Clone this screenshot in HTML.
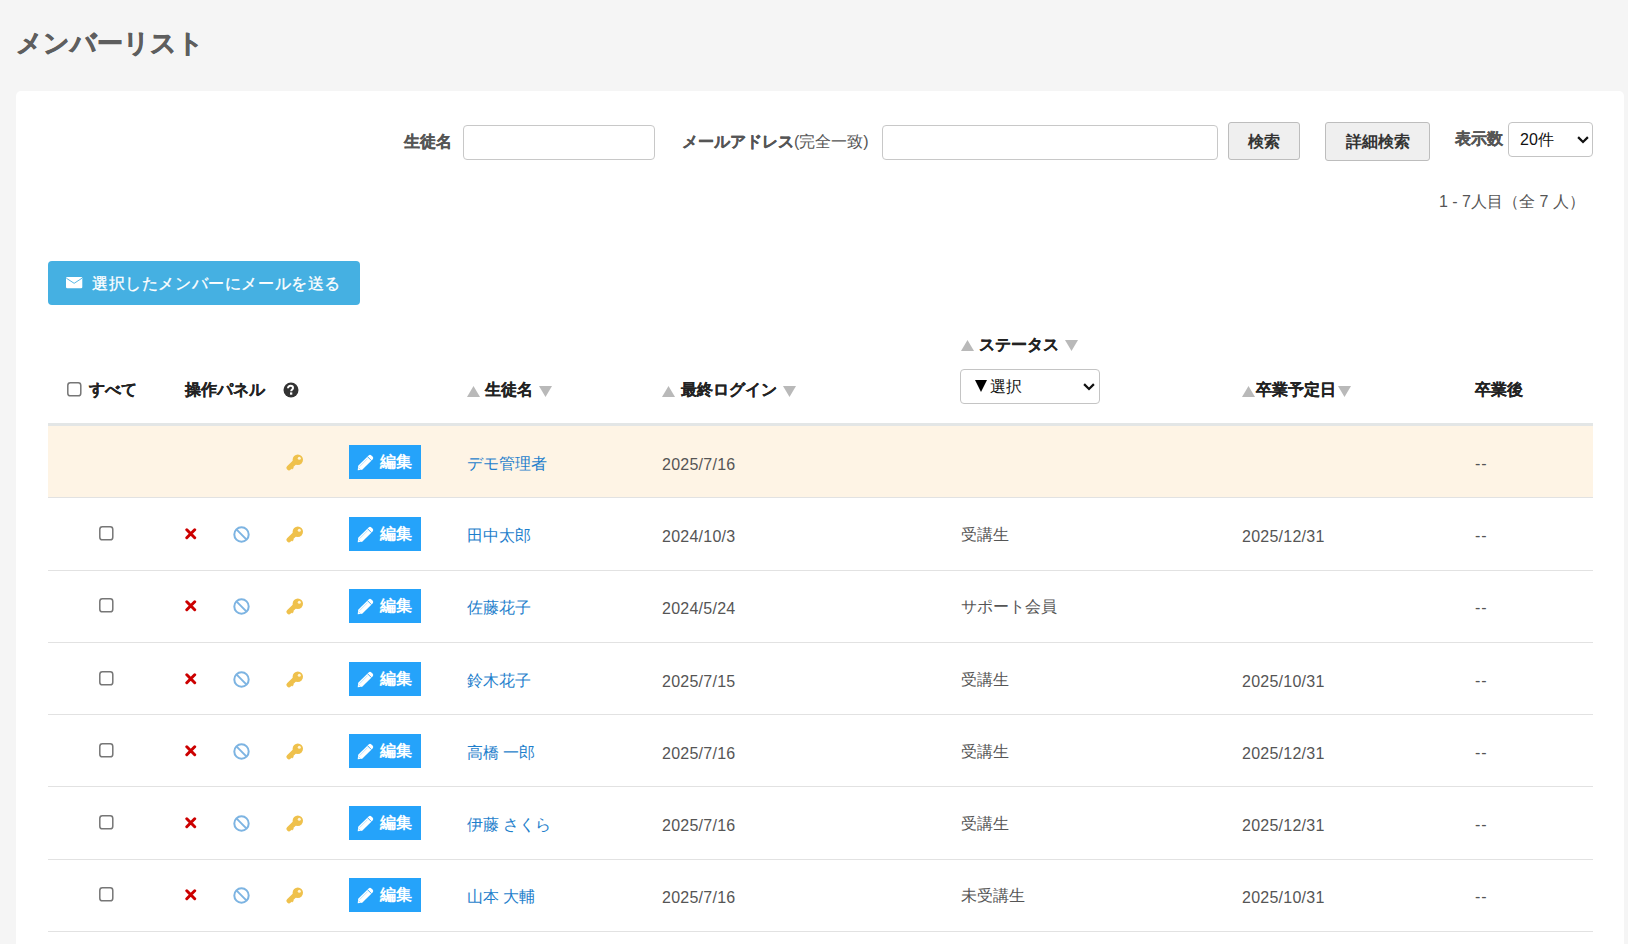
<!DOCTYPE html><html lang="ja"><head><meta charset="utf-8"><title>メンバーリスト</title><style>
*{box-sizing:border-box}
html,body{margin:0;padding:0}
body{width:1628px;height:944px;overflow:hidden;background:#f5f5f5;font-family:"Liberation Sans", sans-serif;position:relative;color:#555}
.a{position:absolute;white-space:nowrap}
.t{position:absolute;white-space:nowrap;line-height:20px;height:20px}
h1{position:absolute;left:16px;top:25px;margin:0;font-size:26px;line-height:36px;font-weight:bold;color:#5e5e5e;letter-spacing:0px;-webkit-text-stroke:0.6px #5e5e5e}
.card{position:absolute;left:16px;top:91px;width:1608px;height:900px;background:#fff;border-radius:5px}
.lbl{font-size:16px;font-weight:bold;color:#555;-webkit-text-stroke:0.25px #555}
.inp{position:absolute;background:#fff;border:1px solid #c8c8c8;border-radius:4px}
.btn{position:absolute;background:#efefef;border:1px solid #bdbdbd;border-radius:3px;font-size:16px;font-weight:bold;color:#333;text-align:center}
.sel{position:absolute;background:#fff;border:1px solid #c4c4c4;border-radius:4px;font-size:16px;color:#111}
.th{font-size:16px;font-weight:bold;color:#222;-webkit-text-stroke:0.15px #222}
.tri{color:#b9b9b9}
.row{position:absolute;left:48px;width:1545px}
.hl{background:#fef4e5}
.bd{position:absolute;left:48px;width:1545px;height:1px;background:#e2e2e2}
.cb{position:absolute;width:13px;height:13px;border:1px solid #767676;border-radius:2px;background:#fff}
.ebtn{position:absolute;width:72px;height:34px;background:#25a3fa;color:#fff;font-size:16px;font-weight:bold}
.name{font-size:16px;color:#1f7fcc}
.td{font-size:16px;color:#555}
.dt{letter-spacing:0.25px}
</style></head><body><h1>メンバーリスト</h1>
<div class="card"></div>
<div class="t lbl" style="left:404px;top:132px;">生徒名</div>
<div class="inp" style="left:463px;top:125px;width:192px;height:35px"></div>
<div class="t lbl" style="left:682px;top:132px;">メールアドレス<span style="font-weight:normal;-webkit-text-stroke:0">(完全一致)</span></div>
<div class="inp" style="left:882px;top:125px;width:336px;height:35px"></div>
<div class="btn" style="left:1228px;top:122px;width:72px;height:38px;line-height:38px">検索</div>
<div class="btn" style="left:1325px;top:122px;width:105px;height:39px;line-height:37px">詳細検索</div>
<div class="t lbl" style="left:1455px;top:129px;">表示数</div>
<div class="sel" style="left:1508px;top:122px;width:85px;height:35px;line-height:33px;padding-left:11px">20件<svg width="12" height="8" viewBox="0 0 12 8" style="position:absolute;left:67.5px;top:13px"><path d="M1.1 1.1 L6 6 L10.9 1.1" fill="none" stroke="#111" stroke-width="2.2"/></svg></div>
<div class="t td" style="left:1439px;top:192px;">1 - 7人目（全 7 人）</div>
<div class="a" style="left:48px;top:261px;width:312px;height:44px;background:#45b0e2;border-radius:4px"></div>
<svg width="17" height="12" viewBox="0 0 17 12" style="position:absolute;left:66px;top:277px"><rect x="0" y="0" width="16.3" height="11.3" rx="1.2" fill="#fff"/><path d="M0.3 1.2 L8.15 6.3 L16 1.2" fill="none" stroke="#45b0e2" stroke-width="0.9"/></svg>
<div class="t " style="left:92px;top:274px;font-size:16px;letter-spacing:0.6px;color:#fff;-webkit-text-stroke:0.3px #fff">選択したメンバーにメールを送る</div>
<svg width="15" height="15" viewBox="0 0 15 15" style="position:absolute;left:67px;top:382.3px"><rect x="0.8" y="0.8" width="13" height="13" rx="2.6" fill="#fff" stroke="#767676" stroke-width="1.5"/></svg>
<div class="t th" style="left:89px;top:380px;">すべて</div>
<div class="t th" style="left:185px;top:380px;">操作パネル</div>
<svg width="16" height="16" viewBox="0 0 16 16" style="position:absolute;left:283px;top:382px"><circle cx="8" cy="8" r="7.5" fill="#333"/><path d="M5.0 6.2 C5.0 4.6 6.1 3.8 7.5 3.8 C9.0 3.8 10.0 4.7 10.0 5.9 C10.0 7.5 8.2 7.6 8.2 9.2" fill="none" stroke="#fff" stroke-width="2"/><rect x="7.0" y="10.4" width="2.3" height="2.3" fill="#fff"/></svg>
<svg width="13" height="11" viewBox="0 0 13 11" style="position:absolute;left:467px;top:386px"><path d="M6.5 0 L13 11 H0 Z" fill="#b9b9b9"/></svg>
<div class="t th" style="left:485px;top:380px;">生徒名</div>
<svg width="13" height="11" viewBox="0 0 13 11" style="position:absolute;left:539px;top:386px"><path d="M0 0 H13 L6.5 11 Z" fill="#b9b9b9"/></svg>
<svg width="13" height="11" viewBox="0 0 13 11" style="position:absolute;left:662px;top:386px"><path d="M6.5 0 L13 11 H0 Z" fill="#b9b9b9"/></svg>
<div class="t th" style="left:681px;top:380px;">最終ログイン</div>
<svg width="13" height="11" viewBox="0 0 13 11" style="position:absolute;left:783px;top:386px"><path d="M0 0 H13 L6.5 11 Z" fill="#b9b9b9"/></svg>
<svg width="13" height="11" viewBox="0 0 13 11" style="position:absolute;left:961px;top:340px"><path d="M6.5 0 L13 11 H0 Z" fill="#b9b9b9"/></svg>
<div class="t th" style="left:979px;top:335px;">ステータス</div>
<svg width="13" height="11" viewBox="0 0 13 11" style="position:absolute;left:1065px;top:340px"><path d="M0 0 H13 L6.5 11 Z" fill="#b9b9b9"/></svg>
<div class="sel" style="left:960px;top:369px;width:140px;height:35px;line-height:33px;padding-left:29px"><svg width="12" height="12" viewBox="0 0 12 12" style="position:absolute;left:14px;top:10px"><path d="M0 0 H12 L6 12 Z" fill="#000"/></svg>選択<svg width="12" height="8" viewBox="0 0 12 8" style="position:absolute;left:122px;top:13px"><path d="M1.1 1.1 L6 6 L10.9 1.1" fill="none" stroke="#111" stroke-width="2.2"/></svg></div>
<svg width="13" height="11" viewBox="0 0 13 11" style="position:absolute;left:1242px;top:386px"><path d="M6.5 0 L13 11 H0 Z" fill="#b9b9b9"/></svg>
<div class="t th" style="left:1256px;top:380px;">卒業予定日</div>
<svg width="13" height="11" viewBox="0 0 13 11" style="position:absolute;left:1338px;top:386px"><path d="M0 0 H13 L6.5 11 Z" fill="#b9b9b9"/></svg>
<div class="t th" style="left:1475px;top:380px;">卒業後</div>
<div class="a" style="left:48px;top:423px;width:1545px;height:3px;background:#e3e6e6"></div>
<div class="row hl" style="top:426px;height:71px"></div>
<div class="bd" style="top:497px"></div>
<svg width="18" height="17" viewBox="0 0 18 17" style="position:absolute;left:286px;top:454px"><circle cx="11.8" cy="5.8" r="5.2" fill="#efc14c"/><path d="M9.5 7.5 L3 13.8" stroke="#efc14c" stroke-width="5" stroke-linecap="round"/><path d="M5.2 14.5 L7 12.8" stroke="#efc14c" stroke-width="2.5"/><circle cx="13.3" cy="4.3" r="1.5" fill="#fff6dc"/></svg>
<div class="ebtn" style="left:349px;top:445px"><svg width="17" height="17" viewBox="0 0 17 17" style="position:absolute;left:8px;top:8.5px"><path d="M11.6 1.4 Q13 0 14.4 1.4 L15.6 2.6 Q17 4 15.6 5.4 L5.2 15.8 L0.7 16.3 L1.2 11.8 Z" fill="#fff"/><path d="M10.4 2.6 L14.4 6.6" stroke="#25a3fa" stroke-width="0.9"/><path d="M2.6 12.6 L10.6 4.6" stroke="#25a3fa" stroke-width="0.5" opacity="0.6"/><path d="M1.4 13.6 L3.4 15.6" stroke="#25a3fa" stroke-width="0.6" opacity="0.7"/></svg><div class="t" style="left:31px;top:7px">編集</div></div>
<div class="t name" style="left:467px;top:453.5px;">デモ管理者</div>
<div class="t td dt" style="left:662px;top:454.5px;">2025/7/16</div>
<div class="t td" style="left:1475px;top:454px;letter-spacing:0.8px">--</div>
<div class="bd" style="top:570px"></div>
<svg width="15" height="15" viewBox="0 0 15 15" style="position:absolute;left:99.1px;top:525.9px"><rect x="0.8" y="0.8" width="13" height="13" rx="2.6" fill="#fff" stroke="#767676" stroke-width="1.5"/></svg>
<svg width="12" height="12" viewBox="0 0 12 12" style="position:absolute;left:185px;top:528px"><path d="M1.8 1.8 L9.7 9.7 M9.7 1.8 L1.8 9.7" stroke="#cc0000" stroke-width="3" stroke-linecap="round"/></svg>
<svg width="17" height="17" viewBox="0 0 17 17" style="position:absolute;left:233px;top:526px"><circle cx="8.5" cy="8.5" r="7.2" fill="none" stroke="#7db4e2" stroke-width="2"/><path d="M3.4 3.4 L13.6 13.6" stroke="#7db4e2" stroke-width="2"/></svg>
<svg width="18" height="17" viewBox="0 0 18 17" style="position:absolute;left:286px;top:526px"><circle cx="11.8" cy="5.8" r="5.2" fill="#efc14c"/><path d="M9.5 7.5 L3 13.8" stroke="#efc14c" stroke-width="5" stroke-linecap="round"/><path d="M5.2 14.5 L7 12.8" stroke="#efc14c" stroke-width="2.5"/><circle cx="13.3" cy="4.3" r="1.5" fill="#fff6dc"/></svg>
<div class="ebtn" style="left:349px;top:517px"><svg width="17" height="17" viewBox="0 0 17 17" style="position:absolute;left:8px;top:8.5px"><path d="M11.6 1.4 Q13 0 14.4 1.4 L15.6 2.6 Q17 4 15.6 5.4 L5.2 15.8 L0.7 16.3 L1.2 11.8 Z" fill="#fff"/><path d="M10.4 2.6 L14.4 6.6" stroke="#25a3fa" stroke-width="0.9"/><path d="M2.6 12.6 L10.6 4.6" stroke="#25a3fa" stroke-width="0.5" opacity="0.6"/><path d="M1.4 13.6 L3.4 15.6" stroke="#25a3fa" stroke-width="0.6" opacity="0.7"/></svg><div class="t" style="left:31px;top:7px">編集</div></div>
<div class="t name" style="left:467px;top:525.5px;">田中太郎</div>
<div class="t td dt" style="left:662px;top:526.5px;">2024/10/3</div>
<div class="t td" style="left:961px;top:525px;">受講生</div>
<div class="t td dt" style="left:1242px;top:526.5px;">2025/12/31</div>
<div class="t td" style="left:1475px;top:526px;letter-spacing:0.8px">--</div>
<div class="bd" style="top:642px"></div>
<svg width="15" height="15" viewBox="0 0 15 15" style="position:absolute;left:99.1px;top:597.9px"><rect x="0.8" y="0.8" width="13" height="13" rx="2.6" fill="#fff" stroke="#767676" stroke-width="1.5"/></svg>
<svg width="12" height="12" viewBox="0 0 12 12" style="position:absolute;left:185px;top:600px"><path d="M1.8 1.8 L9.7 9.7 M9.7 1.8 L1.8 9.7" stroke="#cc0000" stroke-width="3" stroke-linecap="round"/></svg>
<svg width="17" height="17" viewBox="0 0 17 17" style="position:absolute;left:233px;top:598px"><circle cx="8.5" cy="8.5" r="7.2" fill="none" stroke="#7db4e2" stroke-width="2"/><path d="M3.4 3.4 L13.6 13.6" stroke="#7db4e2" stroke-width="2"/></svg>
<svg width="18" height="17" viewBox="0 0 18 17" style="position:absolute;left:286px;top:598px"><circle cx="11.8" cy="5.8" r="5.2" fill="#efc14c"/><path d="M9.5 7.5 L3 13.8" stroke="#efc14c" stroke-width="5" stroke-linecap="round"/><path d="M5.2 14.5 L7 12.8" stroke="#efc14c" stroke-width="2.5"/><circle cx="13.3" cy="4.3" r="1.5" fill="#fff6dc"/></svg>
<div class="ebtn" style="left:349px;top:589px"><svg width="17" height="17" viewBox="0 0 17 17" style="position:absolute;left:8px;top:8.5px"><path d="M11.6 1.4 Q13 0 14.4 1.4 L15.6 2.6 Q17 4 15.6 5.4 L5.2 15.8 L0.7 16.3 L1.2 11.8 Z" fill="#fff"/><path d="M10.4 2.6 L14.4 6.6" stroke="#25a3fa" stroke-width="0.9"/><path d="M2.6 12.6 L10.6 4.6" stroke="#25a3fa" stroke-width="0.5" opacity="0.6"/><path d="M1.4 13.6 L3.4 15.6" stroke="#25a3fa" stroke-width="0.6" opacity="0.7"/></svg><div class="t" style="left:31px;top:7px">編集</div></div>
<div class="t name" style="left:467px;top:597.5px;">佐藤花子</div>
<div class="t td dt" style="left:662px;top:598.5px;">2024/5/24</div>
<div class="t td" style="left:961px;top:597px;">サポート会員</div>
<div class="t td" style="left:1475px;top:598px;letter-spacing:0.8px">--</div>
<div class="bd" style="top:714px"></div>
<svg width="15" height="15" viewBox="0 0 15 15" style="position:absolute;left:99.1px;top:670.9px"><rect x="0.8" y="0.8" width="13" height="13" rx="2.6" fill="#fff" stroke="#767676" stroke-width="1.5"/></svg>
<svg width="12" height="12" viewBox="0 0 12 12" style="position:absolute;left:185px;top:673px"><path d="M1.8 1.8 L9.7 9.7 M9.7 1.8 L1.8 9.7" stroke="#cc0000" stroke-width="3" stroke-linecap="round"/></svg>
<svg width="17" height="17" viewBox="0 0 17 17" style="position:absolute;left:233px;top:671px"><circle cx="8.5" cy="8.5" r="7.2" fill="none" stroke="#7db4e2" stroke-width="2"/><path d="M3.4 3.4 L13.6 13.6" stroke="#7db4e2" stroke-width="2"/></svg>
<svg width="18" height="17" viewBox="0 0 18 17" style="position:absolute;left:286px;top:671px"><circle cx="11.8" cy="5.8" r="5.2" fill="#efc14c"/><path d="M9.5 7.5 L3 13.8" stroke="#efc14c" stroke-width="5" stroke-linecap="round"/><path d="M5.2 14.5 L7 12.8" stroke="#efc14c" stroke-width="2.5"/><circle cx="13.3" cy="4.3" r="1.5" fill="#fff6dc"/></svg>
<div class="ebtn" style="left:349px;top:662px"><svg width="17" height="17" viewBox="0 0 17 17" style="position:absolute;left:8px;top:8.5px"><path d="M11.6 1.4 Q13 0 14.4 1.4 L15.6 2.6 Q17 4 15.6 5.4 L5.2 15.8 L0.7 16.3 L1.2 11.8 Z" fill="#fff"/><path d="M10.4 2.6 L14.4 6.6" stroke="#25a3fa" stroke-width="0.9"/><path d="M2.6 12.6 L10.6 4.6" stroke="#25a3fa" stroke-width="0.5" opacity="0.6"/><path d="M1.4 13.6 L3.4 15.6" stroke="#25a3fa" stroke-width="0.6" opacity="0.7"/></svg><div class="t" style="left:31px;top:7px">編集</div></div>
<div class="t name" style="left:467px;top:670.5px;">鈴木花子</div>
<div class="t td dt" style="left:662px;top:671.5px;">2025/7/15</div>
<div class="t td" style="left:961px;top:670px;">受講生</div>
<div class="t td dt" style="left:1242px;top:671.5px;">2025/10/31</div>
<div class="t td" style="left:1475px;top:671px;letter-spacing:0.8px">--</div>
<div class="bd" style="top:786px"></div>
<svg width="15" height="15" viewBox="0 0 15 15" style="position:absolute;left:99.1px;top:742.9px"><rect x="0.8" y="0.8" width="13" height="13" rx="2.6" fill="#fff" stroke="#767676" stroke-width="1.5"/></svg>
<svg width="12" height="12" viewBox="0 0 12 12" style="position:absolute;left:185px;top:745px"><path d="M1.8 1.8 L9.7 9.7 M9.7 1.8 L1.8 9.7" stroke="#cc0000" stroke-width="3" stroke-linecap="round"/></svg>
<svg width="17" height="17" viewBox="0 0 17 17" style="position:absolute;left:233px;top:743px"><circle cx="8.5" cy="8.5" r="7.2" fill="none" stroke="#7db4e2" stroke-width="2"/><path d="M3.4 3.4 L13.6 13.6" stroke="#7db4e2" stroke-width="2"/></svg>
<svg width="18" height="17" viewBox="0 0 18 17" style="position:absolute;left:286px;top:743px"><circle cx="11.8" cy="5.8" r="5.2" fill="#efc14c"/><path d="M9.5 7.5 L3 13.8" stroke="#efc14c" stroke-width="5" stroke-linecap="round"/><path d="M5.2 14.5 L7 12.8" stroke="#efc14c" stroke-width="2.5"/><circle cx="13.3" cy="4.3" r="1.5" fill="#fff6dc"/></svg>
<div class="ebtn" style="left:349px;top:734px"><svg width="17" height="17" viewBox="0 0 17 17" style="position:absolute;left:8px;top:8.5px"><path d="M11.6 1.4 Q13 0 14.4 1.4 L15.6 2.6 Q17 4 15.6 5.4 L5.2 15.8 L0.7 16.3 L1.2 11.8 Z" fill="#fff"/><path d="M10.4 2.6 L14.4 6.6" stroke="#25a3fa" stroke-width="0.9"/><path d="M2.6 12.6 L10.6 4.6" stroke="#25a3fa" stroke-width="0.5" opacity="0.6"/><path d="M1.4 13.6 L3.4 15.6" stroke="#25a3fa" stroke-width="0.6" opacity="0.7"/></svg><div class="t" style="left:31px;top:7px">編集</div></div>
<div class="t name" style="left:467px;top:742.5px;">高橋 一郎</div>
<div class="t td dt" style="left:662px;top:743.5px;">2025/7/16</div>
<div class="t td" style="left:961px;top:742px;">受講生</div>
<div class="t td dt" style="left:1242px;top:743.5px;">2025/12/31</div>
<div class="t td" style="left:1475px;top:743px;letter-spacing:0.8px">--</div>
<div class="bd" style="top:859px"></div>
<svg width="15" height="15" viewBox="0 0 15 15" style="position:absolute;left:99.1px;top:814.9px"><rect x="0.8" y="0.8" width="13" height="13" rx="2.6" fill="#fff" stroke="#767676" stroke-width="1.5"/></svg>
<svg width="12" height="12" viewBox="0 0 12 12" style="position:absolute;left:185px;top:817px"><path d="M1.8 1.8 L9.7 9.7 M9.7 1.8 L1.8 9.7" stroke="#cc0000" stroke-width="3" stroke-linecap="round"/></svg>
<svg width="17" height="17" viewBox="0 0 17 17" style="position:absolute;left:233px;top:815px"><circle cx="8.5" cy="8.5" r="7.2" fill="none" stroke="#7db4e2" stroke-width="2"/><path d="M3.4 3.4 L13.6 13.6" stroke="#7db4e2" stroke-width="2"/></svg>
<svg width="18" height="17" viewBox="0 0 18 17" style="position:absolute;left:286px;top:815px"><circle cx="11.8" cy="5.8" r="5.2" fill="#efc14c"/><path d="M9.5 7.5 L3 13.8" stroke="#efc14c" stroke-width="5" stroke-linecap="round"/><path d="M5.2 14.5 L7 12.8" stroke="#efc14c" stroke-width="2.5"/><circle cx="13.3" cy="4.3" r="1.5" fill="#fff6dc"/></svg>
<div class="ebtn" style="left:349px;top:806px"><svg width="17" height="17" viewBox="0 0 17 17" style="position:absolute;left:8px;top:8.5px"><path d="M11.6 1.4 Q13 0 14.4 1.4 L15.6 2.6 Q17 4 15.6 5.4 L5.2 15.8 L0.7 16.3 L1.2 11.8 Z" fill="#fff"/><path d="M10.4 2.6 L14.4 6.6" stroke="#25a3fa" stroke-width="0.9"/><path d="M2.6 12.6 L10.6 4.6" stroke="#25a3fa" stroke-width="0.5" opacity="0.6"/><path d="M1.4 13.6 L3.4 15.6" stroke="#25a3fa" stroke-width="0.6" opacity="0.7"/></svg><div class="t" style="left:31px;top:7px">編集</div></div>
<div class="t name" style="left:467px;top:814.5px;">伊藤 さくら</div>
<div class="t td dt" style="left:662px;top:815.5px;">2025/7/16</div>
<div class="t td" style="left:961px;top:814px;">受講生</div>
<div class="t td dt" style="left:1242px;top:815.5px;">2025/12/31</div>
<div class="t td" style="left:1475px;top:815px;letter-spacing:0.8px">--</div>
<div class="bd" style="top:931px"></div>
<svg width="15" height="15" viewBox="0 0 15 15" style="position:absolute;left:99.1px;top:886.9px"><rect x="0.8" y="0.8" width="13" height="13" rx="2.6" fill="#fff" stroke="#767676" stroke-width="1.5"/></svg>
<svg width="12" height="12" viewBox="0 0 12 12" style="position:absolute;left:185px;top:889px"><path d="M1.8 1.8 L9.7 9.7 M9.7 1.8 L1.8 9.7" stroke="#cc0000" stroke-width="3" stroke-linecap="round"/></svg>
<svg width="17" height="17" viewBox="0 0 17 17" style="position:absolute;left:233px;top:887px"><circle cx="8.5" cy="8.5" r="7.2" fill="none" stroke="#7db4e2" stroke-width="2"/><path d="M3.4 3.4 L13.6 13.6" stroke="#7db4e2" stroke-width="2"/></svg>
<svg width="18" height="17" viewBox="0 0 18 17" style="position:absolute;left:286px;top:887px"><circle cx="11.8" cy="5.8" r="5.2" fill="#efc14c"/><path d="M9.5 7.5 L3 13.8" stroke="#efc14c" stroke-width="5" stroke-linecap="round"/><path d="M5.2 14.5 L7 12.8" stroke="#efc14c" stroke-width="2.5"/><circle cx="13.3" cy="4.3" r="1.5" fill="#fff6dc"/></svg>
<div class="ebtn" style="left:349px;top:878px"><svg width="17" height="17" viewBox="0 0 17 17" style="position:absolute;left:8px;top:8.5px"><path d="M11.6 1.4 Q13 0 14.4 1.4 L15.6 2.6 Q17 4 15.6 5.4 L5.2 15.8 L0.7 16.3 L1.2 11.8 Z" fill="#fff"/><path d="M10.4 2.6 L14.4 6.6" stroke="#25a3fa" stroke-width="0.9"/><path d="M2.6 12.6 L10.6 4.6" stroke="#25a3fa" stroke-width="0.5" opacity="0.6"/><path d="M1.4 13.6 L3.4 15.6" stroke="#25a3fa" stroke-width="0.6" opacity="0.7"/></svg><div class="t" style="left:31px;top:7px">編集</div></div>
<div class="t name" style="left:467px;top:886.5px;">山本 大輔</div>
<div class="t td dt" style="left:662px;top:887.5px;">2025/7/16</div>
<div class="t td" style="left:961px;top:886px;">未受講生</div>
<div class="t td dt" style="left:1242px;top:887.5px;">2025/10/31</div>
<div class="t td" style="left:1475px;top:887px;letter-spacing:0.8px">--</div></body></html>
